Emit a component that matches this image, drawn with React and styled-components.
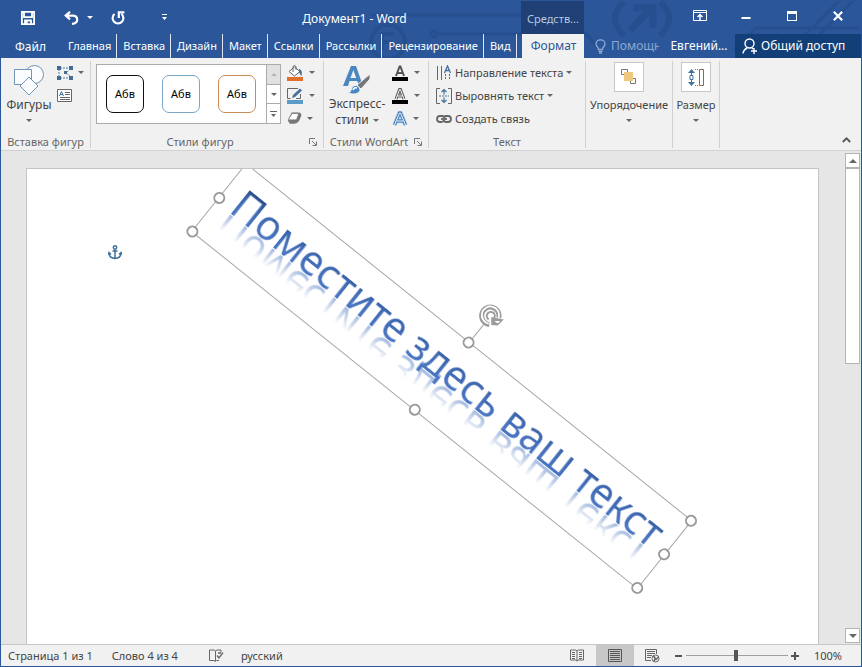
import React from "react";
import styled, { createGlobalStyle } from "styled-components";

const Global = createGlobalStyle`
  * { box-sizing: border-box; }
  body { margin: 0; font: 11px/16px "Noto Sans", "Open Sans", sans-serif; color: #444; }
  button, input { font: inherit; color: inherit; background: none; border: 0; padding: 0; margin: 0; }
  button { cursor: pointer; white-space: nowrap; }
  svg { display: block; flex: none; }
`;

const Window = styled.div`
  display: flex;
  flex-direction: column;
  height: 100vh;
  overflow: hidden;
  border: 1px solid #2b579a;
  background: #e6e6e6;
`;

/* ---------- header ---------- */
const Header = styled.header`
  position: relative;
  display: grid;
  grid-template-columns: 520px 63px minmax(0, 1fr);
  grid-template-rows: 33px 24px;
  background: #2b579a;
  color: #fff;
`;
const Circuit = styled.svg`
  position: absolute;
  top: 0;
  right: 0;
  z-index: 0;
`;
const TitleRow = styled.div`
  position: relative;
  display: flex;
  align-items: center;
  padding-left: 13px;
`;
const QuickButton = styled.button`
  display: flex;
  align-items: center;
  justify-content: center;
  gap: 8px;
  width: ${(p) => p.$w}px;
  height: 30px;
`;
const Title = styled.h1`
  flex: 1;
  margin: 3px 0 0;
  padding-right: 18px;
  text-align: center;
  font-size: 12px;
  font-weight: 400;
`;
const ContextTitle = styled.div`
  position: relative;
  padding: 10px 0 0 6px;
  background: #1f3f75;
  color: #b9c7de;
`;
const WindowButtons = styled.div`
  position: relative;
  display: flex;
  justify-content: flex-end;
`;
const WindowButton = styled.button`
  display: grid;
  place-items: center;
  width: 46px;
  height: 30px;
`;
const Tabs = styled.nav`
  position: relative;
  display: flex;
`;
const Tab = styled.button`
  height: 24px;
  padding: 0 5px 0 6px;
  border-right: 1px solid #dfe7f3;
`;
const FileTab = styled(Tab)`
  width: 61px;
  padding: 2px 2px 0 0;
  border: 0;
  font-size: 12px;
`;
const ActiveTab = styled(Tab)`
  position: relative;
  margin-left: 1px;
  border: 0;
  background: #f1f1f1;
  color: #2b579a;
  font-size: 12px;
`;
const Account = styled.div`
  position: relative;
  display: flex;
  align-items: center;
  padding-left: 11px;
  font-size: 12px;
`;
const TellMe = styled.label`
  display: flex;
  align-items: center;
  gap: 5px;
  color: #8fa9d1;
  input { width: 48px; }
  input::placeholder { color: #8fa9d1; opacity: 1; }
`;
const UserButton = styled.button`
  flex: 1;
  height: 24px;
  padding-left: 4px;
`;
const ShareButton = styled.button`
  display: flex;
  align-items: center;
  gap: 3px;
  width: 126px;
  height: 24px;
  padding-left: 7px;
  background: #123f78;
`;

/* ---------- ribbon ---------- */
const Ribbon = styled.section`
  position: relative;
  display: flex;
  height: 93px;
  padding: 3px 0 2px;
  border-bottom: 1px solid #d2d2d2;
  background: #f1f1f1;
`;
const Group = styled.div`
  display: flex;
  flex-direction: column;
  width: ${(p) => p.$w}px;
  border-right: 1px solid #d0d0d0;
`;
const GroupBody = styled.div`
  display: flex;
  flex: 1;
  align-items: flex-start;
  justify-content: ${(p) => (p.$center ? "center" : "flex-start")};
`;
const GroupFooter = styled.div`
  display: flex;
  align-items: center;
  height: 12px;
  color: #666;
  span { flex: 1; text-align: center; white-space: nowrap; }
  button { width: 14px; }
`;
const BigButton = styled.button`
  display: flex;
  flex-direction: column;
  align-items: center;
  width: ${(p) => p.$w}px;
  padding-top: ${(p) => p.$top || 1}px;
  font-size: ${(p) => p.$size || 11}px;
`;
const BigLabel = styled.span`
  display: flex;
  align-items: center;
  gap: 4px;
  margin-bottom: ${(p) => (p.$spaced ? 6 : 0)}px;
`;
const IconTile = styled.span`
  display: grid;
  place-items: center;
  width: 30px;
  height: 30px;
  margin-bottom: 5px;
  border: 1px solid #c8c8c8;
  background: #fff;
`;
const Stack = styled.div`
  display: flex;
  flex-direction: column;
  padding-left: ${(p) => p.$left || 0}px;
`;
const SmallButton = styled.button`
  display: flex;
  align-items: center;
  gap: ${(p) => p.$gap || 5}px;
  height: 23px;
`;
const Gallery = styled.div`
  display: flex;
  height: 60px;
  margin: 3px 6px 0 5px;
  border: 1px solid #ababab;
  background: #fff;
`;
const Swatches = styled.div`
  display: flex;
  align-items: center;
  gap: 18px;
  padding: 0 10px 0 9px;
`;
const Swatch = styled.button`
  width: 38px;
  height: 38px;
  border: 1px solid ${(p) => p.$color};
  border-radius: 7px;
  color: #000;
  line-height: 34px;
`;
const GalleryScroll = styled.div`
  display: flex;
  flex-direction: column;
  width: 14px;
  border-left: 1px solid #ababab;
`;
const GalleryArrow = styled.button`
  display: grid;
  flex: 1;
  place-items: center;
  background: ${(p) => (p.disabled ? "#e1e1e1" : "#fff")};
  & + & { border-top: 1px solid #ababab; }
`;
const Collapse = styled.button`
  display: flex;
  align-items: flex-end;
  margin: 0 10px 0 auto;
`;

/* ---------- document ---------- */
const Workspace = styled.main`
  display: flex;
  flex: 1;
  min-height: 0;
`;
const Page = styled.article`
  position: relative;
  flex: 1;
  margin: 17px 25px 0 25px;
  overflow: hidden;
  border: 1px solid #c4c4c4;
  border-bottom: 0;
  background: #fff;
`;
const Anchor = styled.svg`
  position: absolute;
  left: 81px;
  top: 76px;
`;
const WordArtFrame = styled.div`
  position: absolute;
  left: 219px;
  top: -6px;
  width: 572px;
  height: 88px;
  border: 1px solid #a6a6a6;
  transform: rotate(38.7deg);
  transform-origin: 0 0;
`;
const WordArtText = styled.p`
  width: max-content;
  margin: 4px 0 0 15px;
  font-size: 41px;
  line-height: 56px;
  white-space: nowrap;
  color: transparent;
  background: linear-gradient(#2a4f8c 14px, #3d67b0 24px, #4a76c4 44px);
  background-clip: text;
  -webkit-box-reflect: below -23px linear-gradient(transparent 25px, rgba(0, 0, 0, 0.55) 46px);
`;
const Handle = styled.i`
  position: absolute;
  left: ${(p) => p.$x};
  top: ${(p) => p.$y};
  width: 12px;
  height: 12px;
  margin: -6px;
  border: 2px solid #9b9b9b;
  border-radius: 50%;
  background: #fff;
`;
const Stem = styled.i`
  position: absolute;
  left: 50%;
  bottom: 100%;
  height: 26px;
  border-left: 1px solid #a6a6a6;
`;
const Rotator = styled.svg`
  position: absolute;
  left: 50%;
  top: -36px;
  margin: -12px;
  transform: rotate(-38.7deg);
`;
const Scrollbar = styled.div`
  display: flex;
  flex-direction: column;
  width: 15px;
  margin: 2px 1px 1px;
`;
const ScrollArrow = styled.button`
  display: grid;
  place-items: center;
  height: 15px;
  border: 1px solid #b4b4b4;
  background: #fff;
`;
const Thumb = styled.div`
  height: 40%;
  border: 1px solid #b4b4b4;
  background: #fff;
`;
const Track = styled.div`
  flex: 1;
`;

/* ---------- status bar ---------- */
const StatusBar = styled.footer`
  display: flex;
  align-items: center;
  height: 22px;
  padding: 0 19px 0 7px;
  border-top: 1px solid #c6c6c6;
  background: #f1f1f1;
`;
const StatusButton = styled.button`
  margin-right: ${(p) => p.$gap}px;
`;
const Spacer = styled.div`
  flex: 1;
`;
const ViewButton = styled.button`
  display: grid;
  place-items: center;
  width: 38px;
  height: 21px;
  background: ${(p) => (p.$active ? "#c8c8c8" : "transparent")};
`;
const ZoomButton = styled.button`
  display: grid;
  place-items: center;
  width: 14px;
  height: 20px;
`;
const ZoomSlider = styled.input`
  width: 102px;
  height: 20px;
  appearance: none;
  background: linear-gradient(#a0a0a0, #a0a0a0) center / 100% 1px no-repeat;
  &::-webkit-slider-thumb { appearance: none; width: 4px; height: 11px; background: #555; }
`;
const ZoomValue = styled.button`
  margin-left: 12px;
`;

/* ---------- icons ---------- */
const Caret = ({ color = "#666", up, large }) => (
  <svg width={large ? 8 : 6} height={large ? 4 : 3} viewBox="0 0 6 3"><path d={up ? "M0 3 3 0l3 3z" : "M0 0h6L3 3z"} fill={color} /></svg>
);
const SaveIcon = () => (
  <svg width="14" height="14" viewBox="0 0 14 14" fill="none" stroke="#fff" strokeWidth="1.8">
    <path d="M.9.9h12.200v12.200H.9zM3 1v5.200h8V1M4 13V9.500h6V13" /><path d="M5.700 10v3" />
  </svg>
);
const UndoIcon = () => (
  <svg width="15" height="14" viewBox="0 0 15 14" fill="none" stroke="#fff" strokeWidth="2.200">
    <path d="M6 .8 1.700 4.600 6 8.400M2 4.600h6.500c3 0 4.700 1.700 4.700 4.100S11 12.500 8 12.800" />
  </svg>
);
const RedoIcon = () => (
  <svg width="14" height="14" viewBox="0 0 14 14" fill="none" stroke="#fff" strokeWidth="2.200">
    <path d="M3.500 3A5.400 5.400 0 1 0 10.500 3M7.800 7V1.400H13.400" />
  </svg>
);
const CustomizeIcon = () => (
  <svg width="5" height="7" viewBox="0 0 5 7" fill="#fff"><path d="M0 0h5v1H0zM0 3h5L2.500 6z" /></svg>
);
const DisplayIcon = () => (
  <svg width="14" height="12" viewBox="0 0 14 12" fill="none" stroke="#fff">
    <path d="M.5.5h13v10H.5zM.5 2.500h13" /><path d="M7 10V5M4.500 7 7 4.500 9.500 7" strokeWidth="1.500" />
  </svg>
);
const MinimizeIcon = () => <svg width="10" height="10" viewBox="0 0 10 10"><path d="M.5 6h9v2h-9z" fill="#fff" /></svg>;
const MaximizeIcon = () => (
  <svg width="10" height="10" viewBox="0 0 10 10"><path d="M0 0h10v10H0zM1 3v6h8V3z" fill="#fff" fillRule="evenodd" /></svg>
);
const CloseIcon = () => (
  <svg width="10" height="10" viewBox="0 0 10 10" stroke="#fff" strokeWidth="2.200"><path d="m.8.8 8.400 8.400M9.200.8.8 9.200" /></svg>
);
const BulbIcon = () => (
  <svg width="11" height="15" viewBox="0 0 11 15" fill="none" stroke="#8fa9d1" strokeWidth="1.300">
    <path d="M3.500 10.500C3.500 8 1 7.500 1 4.800a4.500 4 0 0 1 9 0C10 7.500 7.500 8 7.500 10.500zM3.500 12.300h4M4 14h3" />
  </svg>
);
const ShareIcon = () => (
  <svg width="16" height="17" viewBox="0 0 16 17" fill="none" stroke="#fff" strokeWidth="1.400">
    <circle cx="7.500" cy="5.500" r="4.500" /><path d="M1 15.500c.5-3 2-4.500 4-5.500M10 10l1 1M12 10v6M9 13h6" />
  </svg>
);
const ShapesIcon = () => (
  <svg width="30" height="32" viewBox="0 0 30 32" fill="#fafcfd" stroke="#6f94b5">
    <circle cx="20.500" cy="9.500" r="9" /><path d="M.5 4.500h17v15H.5z" /><path d="m15 12 9 9-9 9-9-9z" />
  </svg>
);
const EditShapeIcon = () => (
  <svg width="17" height="14" viewBox="0 0 17 14">
    <path d="M3 2h9M2 3v8M3 12h10M13 3 9 7l5 4" fill="none" stroke="#4f7ca5" strokeDasharray="2 1" />
    <path d="M0 0h4v4H0zM12 0h4v4h-4zM0 10h4v4H0zM12 10h4v4h-4zM7 5h3v3H7z" fill="#426c94" />
  </svg>
);
const TextBoxIcon = () => (
  <svg width="16" height="13" viewBox="0 0 16 13" fill="none" stroke="#666">
    <path d="M.5.5h14v12H.5z" fill="#fff" /><path d="M8 3.500h5M8 5.500h5M3 8.500h10M3 10.500h10" />
    <path d="m2.500 7 2-4.500 2 4.500M3.200 5.500h2.600" stroke="#41719c" />
  </svg>
);
const FillIcon = () => (
  <svg width="17" height="16" viewBox="0 0 17 16" fill="none" stroke="#666">
    <path d="M2 6.500 7.500 2 13 6.500 7.500 11z" fill="#fff" /><path d="M6 7V1.500q1.500-2 3 0V5" />
    <path d="M12 4q4 1 2.500 7-1.200-1-2.500-4z" fill="#41719c" stroke="none" /><path d="M0 12h16v4H0z" fill="#e0702a" stroke="none" />
  </svg>
);
const OutlineIcon = () => (
  <svg width="17" height="16" viewBox="0 0 17 16" fill="none">
    <path d="M11 .5H.5v10h3M13.500 6v4.500H9" stroke="#666" /><path d="m5 10 1-3L13 .5l2 2L8 9z" fill="#41719c" /><path d="M0 12h16v4H0z" fill="#5b9bc9" />
  </svg>
);
const EffectsIcon = () => (
  <svg width="15" height="13" viewBox="0 0 16 13">
    <path d="M5 0h8q3 1 2 4l-2 5q-2 3-5 3H3L1 9z" fill="#777" /><path d="M5.500 1h6q1 .5.500 2l-1.500 4-1 1H2.500q-1-.5-.5-1.500z" fill="#fff" stroke="#777" />
  </svg>
);
const QuickStylesIcon = () => (
  <svg width="28" height="30" viewBox="0 0 28 30">
    <path d="M8 0h5l7 20h-4l-1.700-5H6.500L5 20H0zM10.400 4 7.500 12h5.700z" fill="#4a86c0" fillRule="evenodd" />
    <path d="M27 8v5l-9 10-4-4z" fill="#777" stroke="#f1f1f1" />
    <path d="M5 27q3-1 3.500-4 1-4 5-3.500 4 1.500 3.500 5-2.500 5.500-12 2.500z" fill="#4a86c0" stroke="#f1f1f1" />
    <path d="M10 24q1-3 4-2" fill="none" stroke="#fff" strokeWidth="1.500" />
  </svg>
);
const LetterIcon = ({ kind }) => (
  <svg width="17" height="16" viewBox="0 0 17 16">
    {kind === "glow" ? (
      <g fill="none"><path d="m2.500 14 5-12h1l5 12M5 10h6" stroke="#a8cbea" strokeWidth="4.500" /><path d="m2.500 14 5-12h1l5 12M5 10h6" stroke="#3b75b3" strokeWidth="2.800" /><path d="m2.500 14 5-12h1l5 12M5 10h6" stroke="#fff" /></g>
    ) : (
      <g fill="none"><path d="m4 11 3.600-9.500h.8L12 11M5.500 8h5" stroke="#555" strokeWidth={kind === "outline" ? 3 : 2} />{kind === "outline" && <path d="m4 11 3.600-9.500h.8L12 11M5.500 8h5" stroke="#fff" />}<path d="M0 12h16v4H0z" fill="#000" /></g>
    )}
  </svg>
);
const DirectionIcon = () => (
  <svg width="16" height="16" viewBox="0 0 16 16" fill="none" stroke="#666">
    <path d="M1.500 1v14M5.500 1v14" /><path d="M9.500 9v6M13.500 9v6" strokeDasharray="2 1" />
    <path d="m8.500 8 3-7 3 7M9.500 5.500h4" stroke="#41719c" strokeWidth="1.300" />
  </svg>
);
const AlignIcon = () => (
  <svg width="16" height="16" viewBox="0 0 16 16" fill="none" stroke="#666">
    <path d="M4 .5H.5v15H4M12 .5h3.500v15H12" /><path d="M3 8h10" stroke="#41719c" strokeDasharray="2 1" />
    <path d="M8 6.500V1.500M5.500 4 8 1.500 10.500 4M8 9.500v5M5.500 12 8 14.500 10.500 12" stroke="#41719c" strokeWidth="1.200" />
  </svg>
);
const LinkIcon = () => (
  <svg width="16" height="10" viewBox="0 0 16 10" fill="none" stroke="#666" strokeWidth="1.800">
    <path d="M7.500 6.500Q7 8 5.500 8H4Q1 8 1 5t3-3h2q2.500 0 2.500 2.500M8 4.500Q8 2 10 2h2q3 0 3 3t-3 3h-2Q8 8 8 6" /><path d="M5 5h6" />
  </svg>
);
const ArrangeIcon = () => (
  <svg width="16" height="16" viewBox="0 0 16 16" fill="#fff" stroke="#777">
    <path d="M.5.5h6v5h-6zM9.500 9.500h5v5h-5z" /><path d="M3 3h9v9H3z" fill="#edc87e" stroke="none" />
  </svg>
);
const SizeIcon = () => (
  <svg width="17" height="17" viewBox="0 0 17 17" fill="none">
    <path d="M3.500 0 7 4H0zM3.500 17 7 13H0z" fill="#41719c" /><path d="M3.500 3v3M3.500 11v3" stroke="#41719c" /><path d="M2 6.500h3v4H2z" stroke="#41719c" />
    <path d="M7 .5h4M7 16.500h4" stroke="#777" strokeDasharray="1 1" /><path d="M11.500.5h4v16h-4z" stroke="#807060" />
  </svg>
);
const LauncherIcon = () => (
  <svg width="8" height="8" viewBox="0 0 8 8" fill="none" stroke="#777"><path d="M.5 6V.5H6M3 3l4 4M7.500 3.500v4h-4" /></svg>
);
const ProofIcon = () => (
  <svg width="15" height="13" viewBox="0 0 15 13" fill="none" stroke="#666">
    <path d="M10 11.500H7.500L6.500 12.500 5 11.500H.5V1H5l1.500 1L8 1h4v2M6.500 2v10" /><path d="m8 6.500 2 2.500 4-5.500M9 4h3" strokeWidth="1.300" />
  </svg>
);
const ReadIcon = () => (
  <svg width="14" height="13" viewBox="0 0 14 13" fill="none" stroke="#666">
    <path d="M7 2 5.500 1H.5v10h5L7 12l1.500-1h5V1h-5zv10" /><path d="M2 3.500h3M2 5.500h3M2 7.500h3M2 9.500h3M9 3.500h3M9 5.500h3M9 7.500h3M9 9.500h3" />
  </svg>
);
const PrintIcon = () => (
  <svg width="14" height="13" viewBox="0 0 14 13" fill="none" stroke="#555"><path d="M.5.5h13v12H.5zM2 2.500h10M2 4.500h10M2 6.500h10M2 8.500h10M2 10.500h10" /></svg>
);
const WebIcon = () => (
  <svg width="15" height="14" viewBox="0 0 15 14" fill="none" stroke="#666">
    <path d="M6 11.500H.5V.5h11V5M2 2.500h8M2 4.500h8M2 6.500h5M2 8.500h4" /><circle cx="10.500" cy="9.500" r="3.500" fill="#f1f1f1" /><path d="M8 7.500q2 0 2 2t2 0 1-2M9 12l1-2" strokeWidth="1.500" />
  </svg>
);

const TABS = ["Главная", "Вставка", "Дизайн", "Макет", "Ссылки", "Рассылки", "Рецензирование", "Вид"];
const SWATCHES = ["#111", "#7aa7c7", "#c98c56"];
const HANDLES = [["50%", "0"], ["100%", "0"], ["0", "50%"], ["100%", "50%"], ["0", "100%"], ["50%", "100%"], ["100%", "100%"]];

const Footer = ({ children, launcher }) => (
  <GroupFooter>
    <span>{children}</span>
    {launcher && <button aria-label={launcher}><LauncherIcon /></button>}
  </GroupFooter>
);

export default function App() {
  return (
    <Window>
      <Global />
      <Header>
        <Circuit width="500" height="57" viewBox="361 1 500 57" fill="none" stroke="#264f8f" strokeWidth="3" aria-hidden="true">
          <circle cx="388" cy="42" r="17" strokeWidth="4" />
          <path d="M382 50V34h12M382 42h9" strokeWidth="4" />
          <path d="M372 15h196l30 32" />
          <circle cx="434" cy="34" r="3" /><path d="M438 34h90" />
          <path d="M624 2q-18 15 0 34M660 2q18 15 0 34" strokeWidth="6" />
          <path d="m630 30 22-22M633 8h20v20" strokeWidth="7" />
          <path d="m734 50 22-22h104M820 34l34-34M806 34l34-34" />
        </Circuit>
        <TitleRow>
          <QuickButton $w={28} aria-label="Сохранить"><SaveIcon /></QuickButton>
          <QuickButton $w={72} aria-label="Отменить"><UndoIcon /><Caret color="#fff" /></QuickButton>
          <QuickButton $w={8} aria-label="Повторить"><RedoIcon /></QuickButton>
          <QuickButton $w={84} aria-label="Настройка панели"><CustomizeIcon /></QuickButton>
          <Title>Документ1 - Word</Title>
        </TitleRow>
        <ContextTitle>Средств...</ContextTitle>
        <WindowButtons>
          <WindowButton aria-label="Параметры ленты"><DisplayIcon /></WindowButton>
          <WindowButton aria-label="Свернуть"><MinimizeIcon /></WindowButton>
          <WindowButton aria-label="Развернуть"><MaximizeIcon /></WindowButton>
          <WindowButton aria-label="Закрыть"><CloseIcon /></WindowButton>
        </WindowButtons>
        <Tabs>
          <FileTab>Файл</FileTab>
          {TABS.map((t) => <Tab key={t}>{t}</Tab>)}
        </Tabs>
        <ActiveTab>Формат</ActiveTab>
        <Account>
          <TellMe><BulbIcon /><input aria-label="Помощник" placeholder="Помощник" /></TellMe>
          <UserButton>Евгений...</UserButton>
          <ShareButton><ShareIcon />Общий доступ</ShareButton>
        </Account>
      </Header>

      <Ribbon>
        <Group $w={90}>
          <GroupBody>
            <BigButton $w={56} $size={12} $top={4}><ShapesIcon /><BigLabel $spaced>Фигуры</BigLabel><Caret /></BigButton>
            <Stack>
              <SmallButton $gap={4} aria-label="Изменить фигуру"><EditShapeIcon /><Caret /></SmallButton>
              <SmallButton aria-label="Надпись"><TextBoxIcon /></SmallButton>
            </Stack>
          </GroupBody>
          <Footer>Вставка фигур</Footer>
        </Group>
        <Group $w={233}>
          <GroupBody>
            <Gallery>
              <Swatches>{SWATCHES.map((c) => <Swatch key={c} $color={c}>Абв</Swatch>)}</Swatches>
              <GalleryScroll>
                <GalleryArrow disabled aria-label="Вверх"><Caret up color="#b5b5b5" /></GalleryArrow>
                <GalleryArrow aria-label="Вниз"><Caret /></GalleryArrow>
                <GalleryArrow aria-label="Ещё"><svg width="7" height="6" viewBox="0 0 7 6" fill="#666"><path d="M0 0h7v1H0zM1 3h5L3.500 6z" /></svg></GalleryArrow>
              </GalleryScroll>
            </Gallery>
            <Stack>
              <SmallButton aria-label="Заливка фигуры"><FillIcon /><Caret /></SmallButton>
              <SmallButton aria-label="Контур фигуры"><OutlineIcon /><Caret /></SmallButton>
              <SmallButton aria-label="Эффекты фигуры"><EffectsIcon /><Caret /></SmallButton>
            </Stack>
          </GroupBody>
          <Footer launcher="Формат фигуры">Стили фигур</Footer>
        </Group>
        <Group $w={105}>
          <GroupBody>
            <BigButton $w={66} $size={12} $top={5}><QuickStylesIcon /><BigLabel>Экспресс-</BigLabel><BigLabel>стили <Caret /></BigLabel></BigButton>
            <Stack $left={2}>
              <SmallButton aria-label="Заливка текста"><LetterIcon kind="fill" /><Caret /></SmallButton>
              <SmallButton aria-label="Контур текста"><LetterIcon kind="outline" /><Caret /></SmallButton>
              <SmallButton $gap={4} aria-label="Эффекты текста"><LetterIcon kind="glow" /><Caret /></SmallButton>
            </Stack>
          </GroupBody>
          <Footer launcher="Формат текста">Стили WordArt</Footer>
        </Group>
        <Group $w={157}>
          <GroupBody>
            <Stack $left={7}>
              <SmallButton $gap={3}><DirectionIcon />Направление текста<Caret /></SmallButton>
              <SmallButton $gap={3}><AlignIcon />Выровнять текст<Caret /></SmallButton>
              <SmallButton $gap={3}><LinkIcon />Создать связь</SmallButton>
            </Stack>
          </GroupBody>
          <Footer>Текст</Footer>
        </Group>
        <Group $w={87}>
          <GroupBody $center>
            <BigButton $w={84}><IconTile><ArrangeIcon /></IconTile><BigLabel $spaced>Упорядочение</BigLabel><Caret /></BigButton>
          </GroupBody>
        </Group>
        <Group $w={47}>
          <GroupBody $center>
            <BigButton $w={46}><IconTile><SizeIcon /></IconTile><BigLabel $spaced>Размер</BigLabel><Caret /></BigButton>
          </GroupBody>
        </Group>
        <Collapse aria-label="Свернуть ленту">
          <svg width="9" height="11" viewBox="0 0 9 11" fill="none" stroke="#555" strokeWidth="1.800"><path d="m.8 5 3.700-3.700L8.200 5" /></svg>
        </Collapse>
      </Ribbon>

      <Workspace>
        <Page>
          <Anchor width="14" height="15" viewBox="0 0 14 15" fill="none" stroke="#41719c" strokeWidth="1.500">
            <circle cx="7" cy="2.500" r="1.700" /><path d="M7 4.500v9M4.500 6h5M1 8q0 5 6 5.500Q13 13 13 8M0 9.500 1 7.500l2 2M14 9.500l-1-2-2 2" />
          </Anchor>
          <WordArtFrame>
            <WordArtText>Поместите здесь ваш текст</WordArtText>
            <Stem />
            {HANDLES.map(([x, y]) => <Handle key={x + y} $x={x} $y={y} />)}
            <Rotator width="26" height="26" viewBox="0 0 26 26" fill="none">
              <path d="M11 21.500A8.700 8.700 0 1 1 20.500 15" stroke="#9b9b9b" strokeWidth="5" />
              <path d="M13 22V14l12.500 2.500-6 6z" fill="#9b9b9b" />
              <path d="M10.500 20.800A8.700 8.700 0 1 1 20.500 15" stroke="#fff" strokeWidth="1.800" />
              <path d="M10.500 16.500A4 4 0 1 1 16 15" stroke="#9b9b9b" strokeWidth="2" />
              <path d="m16 18 6 0-2.500 2.500z" fill="#fff" />
            </Rotator>
          </WordArtFrame>
        </Page>
        <Scrollbar>
          <ScrollArrow aria-label="Прокрутить вверх"><Caret up large /></ScrollArrow>
          <Thumb />
          <Track />
          <ScrollArrow aria-label="Прокрутить вниз"><Caret large /></ScrollArrow>
        </Scrollbar>
      </Workspace>

      <StatusBar>
        <StatusButton $gap={19}>Страница 1 из 1</StatusButton>
        <StatusButton $gap={31}>Слово 4 из 4</StatusButton>
        <StatusButton $gap={17} aria-label="Правописание"><ProofIcon /></StatusButton>
        <StatusButton>русский</StatusButton>
        <Spacer />
        <ViewButton aria-label="Режим чтения"><ReadIcon /></ViewButton>
        <ViewButton $active aria-label="Разметка страницы"><PrintIcon /></ViewButton>
        <ViewButton aria-label="Веб-документ"><WebIcon /></ViewButton>
        <ZoomButton aria-label="Уменьшить"><svg width="7" height="2"><path d="M0 0h7v2H0z" fill="#555" /></svg></ZoomButton>
        <ZoomSlider type="range" min="0" max="100" defaultValue="49" aria-label="Масштаб" />
        <ZoomButton aria-label="Увеличить"><svg width="8" height="8"><path d="M3 0h2v3h3v2H5v3H3V5H0V3h3z" fill="#555" /></svg></ZoomButton>
        <ZoomValue>100%</ZoomValue>
      </StatusBar>
    </Window>
  );
}
